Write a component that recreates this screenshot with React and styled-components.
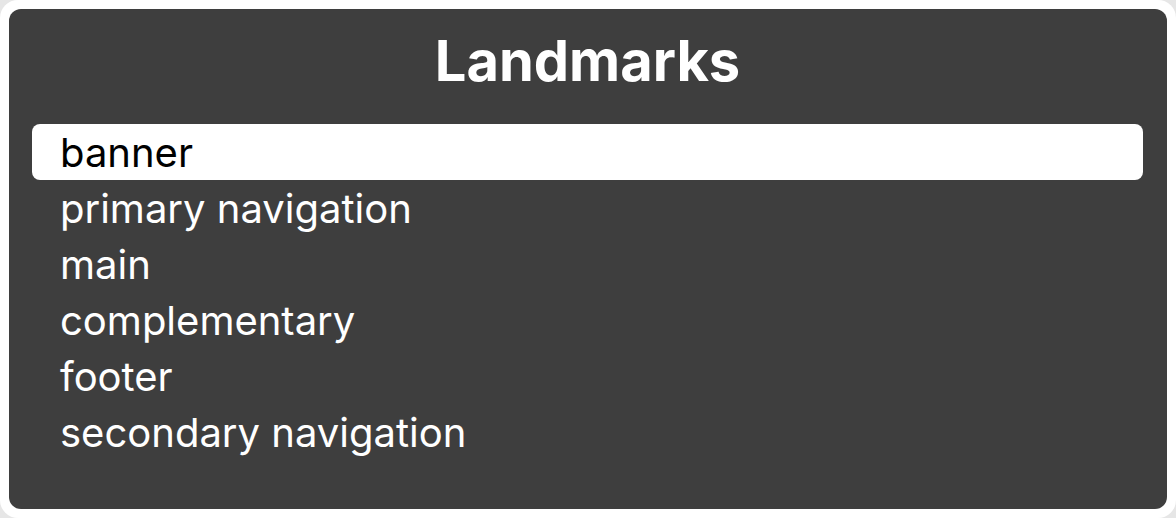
import React, { useState } from "react";
import styled, { createGlobalStyle } from "styled-components";

const GlobalStyle = createGlobalStyle`
	html, body {
		margin: 0;
		padding: 0;
		background-color: #e6e6e6;
	}
	body {
		font-family: Inter, "Noto Sans", sans-serif;
	}
`;

const items = [
	"banner",
	"primary navigation",
	"main",
	"complementary",
	"footer",
	"secondary navigation",
];

const App = () => {
	const [active, setActive] = useState(0);

	return (
		<>
			<GlobalStyle />
			<Frame>
				<Panel>
					<Title>Landmarks</Title>
					<List>
						{items.map((name, i) => (
							<Item key={name} active={i === active} onClick={() => setActive(i)}>
								{name}
							</Item>
						))}
					</List>
				</Panel>
			</Frame>
		</>
	);
};

export default App;

const Frame = styled.div`
	width: 1176px;
	height: 518px;
	box-sizing: border-box;
	padding: 9px;
	background-color: white;
	border-radius: 18px;
`;

const Panel = styled.div`
	height: 100%;
	box-sizing: border-box;
	background-color: #3e3e3e;
	border-radius: 12px;
	padding: 20px 24px 48px 23px;
	display: flex;
	flex-direction: column;
`;

const Title = styled.div`
	color: white;
	font-weight: 700;
	font-size: 56px;
	line-height: 64px;
	text-align: center;
	margin-bottom: 31px;
`;

const List = styled.div`
	display: flex;
	flex-direction: column;
`;

const Item = styled.div`
	height: 56px;
	display: flex;
	align-items: center;
	padding-left: 28px;
	border-radius: 8px;
	font-size: 40px;
	color: ${({ active }) => (active ? "black" : "white")};
	background-color: ${({ active }) => (active ? "white" : "transparent")};
	cursor: default;
`;
